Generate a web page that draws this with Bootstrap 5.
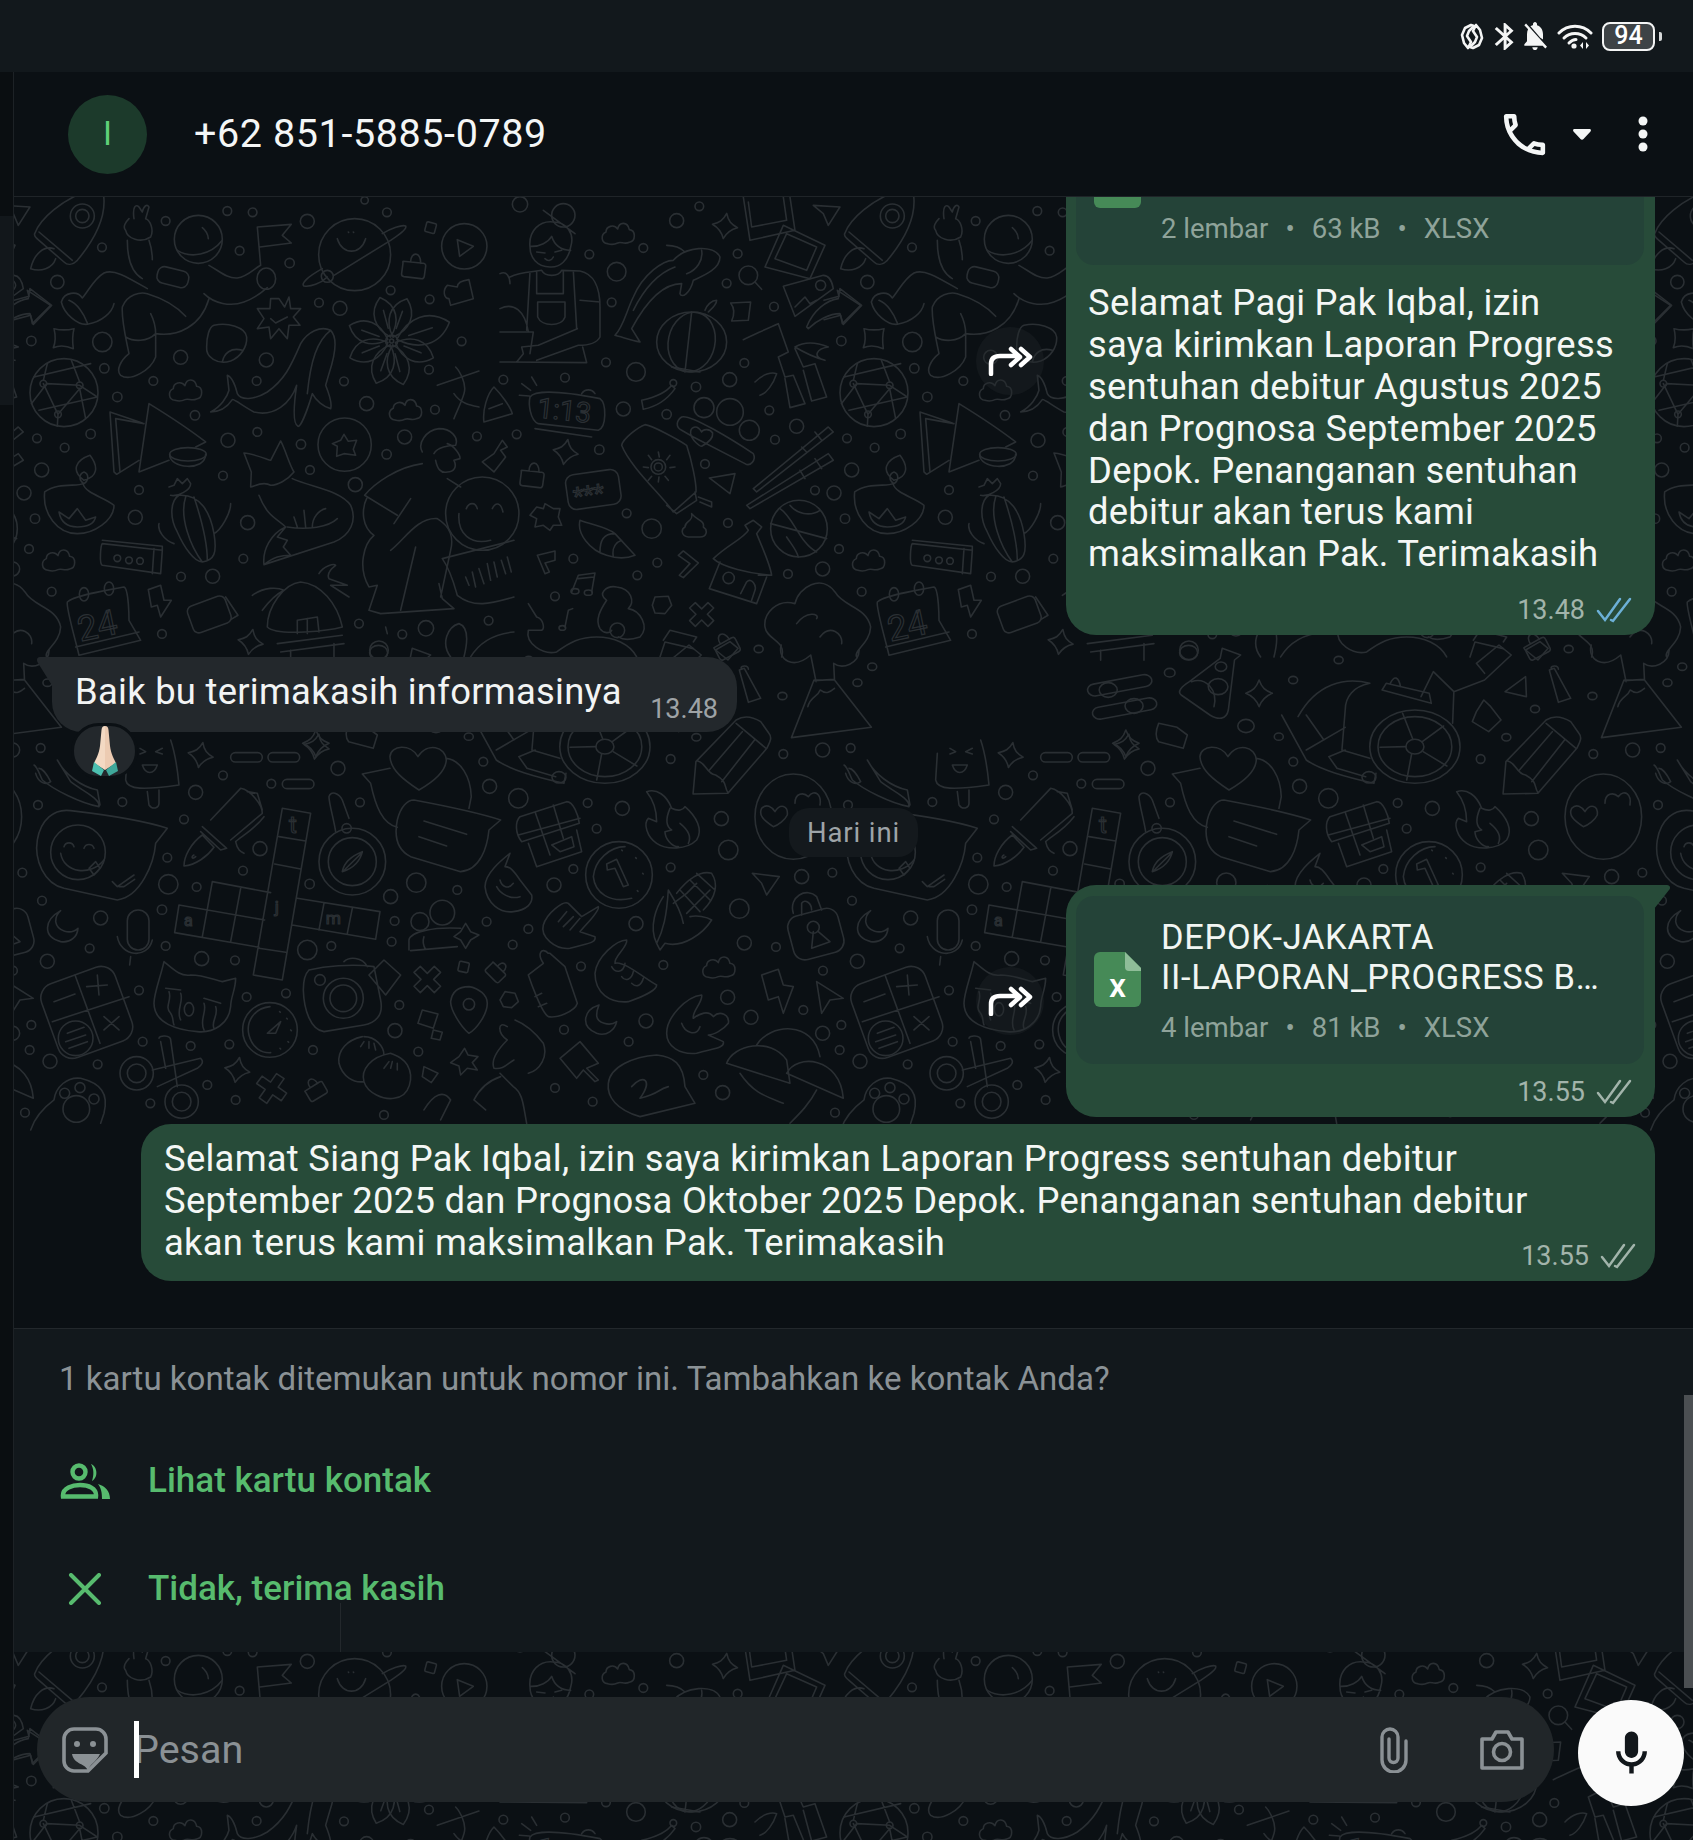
<!doctype html>
<html lang="id">
<head>
<meta charset="utf-8">
<title>Chat</title>
<link href="https://cdn.jsdelivr.net/npm/bootstrap@5.3.0/dist/css/bootstrap.min.css" rel="stylesheet">
<style>
html,body{margin:0;background:#0b1014}
body{font-family:Roboto,"Liberation Sans",sans-serif;color:#f2f4f4}
.phone{width:1693px;height:1840px;overflow:hidden}
.statusbar{height:72px;background:#12181c;padding-right:31px;gap:9.5px}
.stat-ic{display:block}
.batt{width:53px;height:29px;border:2.5px solid #f4f5f5;border-radius:8px;background:#3e4346;font-size:25px;font-weight:500;line-height:24px;text-align:center;color:#fff}
.nib{width:3px;height:9px;background:#d6d8d9;border-radius:0 2px 2px 0;margin-left:-5.5px}
.leftedge{width:14px;background:#0a0e11;border-right:1px solid #1d2226}
.leftedge i{display:block;height:189px;margin-top:144px;background:#12171b}
.topbar{height:125px;background:#0b1014;border-bottom:1px solid #1f2428;padding-left:54px;padding-right:45px;flex:none}
.ava{width:79px;height:79px;background:#1c3a2b;color:#5fd078;font-size:33px}
.phone-no{margin-left:47px;font-size:39.5px;color:#f4f6f6;letter-spacing:.6px}
.wall{position:relative;background:#0b1014;overflow:hidden;flex:1 1 auto;min-height:0}
.doodle{position:absolute;left:0;top:0;width:1679px;height:1643px}
.doodle path,.doodle circle,.doodle ellipse,.doodle rect{fill:none;stroke:#2a2f33;stroke-width:1.6;stroke-linejoin:round;stroke-linecap:round;vector-effect:non-scaling-stroke}
.doodle text{fill:none;stroke:#2a2f33;stroke-width:1.2;vector-effect:non-scaling-stroke;font-family:Roboto,sans-serif}
.convo{position:relative;height:1131px;padding:0 38px 47px 38px;overflow:hidden}
.bub-out{position:relative;background:#274b39;border-radius:30px;color:#f4f7f5}
.bub-w{width:589px;padding:11px 11px 9px 10px}
.tail{position:absolute;top:0}
.has-tail{border-top-right-radius:0}
.tail-r{left:100%;margin-left:-1px}
.tail-l{right:100%;margin-right:-1px}
.filebox{background:#244338;border-radius:18px;height:168px;padding:21px 0 0 18px}
.xls{flex:none;margin-top:35px}
.filetxt{margin-left:20px;min-width:0}
.fname{font-size:34.4px;line-height:40px;white-space:nowrap;color:#f2f6f3;letter-spacing:.7px}
.fgap{height:80px}
.fmeta{font-size:27.5px;line-height:34px;margin-top:14px;color:#8fa39a;white-space:nowrap}
.dotsep{margin:0 17px}
.msgtxt{font-size:36.4px;line-height:41.8px;letter-spacing:.27px}
.meta{font-size:27px;line-height:32px;color:#a2b4ab}
.time-in{font-size:27px;line-height:32px;color:#9ea3a6}
.fwd{width:68px;height:68px;background:rgba(34,40,44,.35);border-radius:50%;margin-right:22px;flex:none}
.bub-in{position:relative;background:#23282c;border-radius:0 30px 30px 30px;width:685px;height:75px;padding:0 19px 0 23px}
.react{position:absolute;left:19px;top:66px;width:67px;height:56px;background:#23282c;border:3px solid #0b1014}
.datepill{width:129px;height:49px;background:#14191d;color:#9ea4a8;font-size:27.5px;letter-spacing:.9px;border-radius:20px;margin:76px auto 28px}
.bub-long{width:1514px;height:157px;padding:14px 20px 0 23px;margin-top:7px}
.meta-abs{position:absolute;right:19px;bottom:9px}
.askcard{position:relative;height:324px;background:#12181c;border-top:1px solid #23282c}
.asktext{font-size:33.1px;color:#8b9296;padding:28px 0 0 45px;line-height:44px}
.askrow{height:108px;padding-left:46px;color:#57bb6e;font-size:35px;font-weight:500}
.askrow svg{flex:none}
.askic{width:50px;margin-right:38px}
.seam{position:absolute;left:324px;bottom:0;width:3px;height:49px;border-right:1px solid #23282c}
.composer{position:relative;padding:45px 9px 0 23px;gap:24px}
.inputbox{flex:1 1 auto;height:105px;background:#212629;border-radius:53px;padding:0 29px 0 25px}
.cursorbar{width:5px;height:57px;background:#fff;margin-left:26px;margin-right:-5px;position:relative;z-index:1}
.hint{font-size:39.5px;color:#8b9195}
.micbtn{width:106px;height:106px;background:#fafafa;margin-top:3px;flex:none}
.scrollthumb{position:absolute;right:0;top:1198px;width:9px;height:293px;background:#4b4f52;z-index:3}
</style>
</head>
<body>
<div class="phone d-flex flex-column">
  <div class="statusbar d-flex justify-content-end align-items-center flex-none">
    <svg class="stat-ic" width="24" height="27" viewBox="0 0 24 27" fill="none" stroke="#f4f5f5" stroke-width="2.600" stroke-linejoin="round"><path d="M11 2 5 5 2 12 4 20 8 25 11 19 7 13 9 8 14 3Z"/><path d="M13 25 19 22 22 15 20 7 16 2 13 8 17 14 15 19 10 24Z"/></svg>
    <svg class="stat-ic" width="20" height="27" viewBox="4.500 2 13.500 20" preserveAspectRatio="none" fill="#f4f5f5"><path d="M17.710 7.710L12 2h-1v7.590L6.410 5 5 6.410 10.590 12 5 17.590 6.410 19 11 14.410V22h1l5.710-5.710-4.300-4.290 4.300-4.290zM13 5.830l1.880 1.880L13 9.590V5.830zm1.880 10.460L13 18.170v-3.760l1.880 1.880z"/></svg>
    <svg class="stat-ic" width="24" height="28" viewBox="3 2.500 18 19.500" preserveAspectRatio="none" fill="#f4f5f5"><path d="M20 18.690L7.840 6.140 5.270 3.490 4 4.760l2.800 2.800v.01c-.52.99-.8 2.160-.8 3.420v5l-2 2v1h13.730l2 2L21 19.720l-1-1.030zM12 22c1.110 0 2-.89 2-2h-4c0 1.110.89 2 2 2zm6-7.320V11c0-3.080-1.640-5.640-4.500-6.320V4c0-.83-.67-1.500-1.500-1.500s-1.500.67-1.500 1.500v.68c-.15.03-.29.08-.42.12-.1.03-.2.07-.3.11h-.01c-.2.08-.4.17-.59.27-.2.1-.4.2-.59.33l7.410 7.970z"/></svg>
    <svg class="stat-ic" width="36" height="27" viewBox="0 0 36 27" fill="none" stroke="#f4f5f5" stroke-width="3" stroke-linecap="round"><path d="M2 10C11 1 25 1 34 10"/><path d="M7 15C13 9 23 9 29 15"/><path d="M12 20C15 17 17 16.500 19 16.500"/><circle cx="17" cy="23" r="2.600" fill="#f4f5f5" stroke="none"/><path d="M26 19 23 22.500 26 26ZM29 19 32 22.500 29 26Z" fill="#f4f5f5" stroke="none"/></svg>
    <div class="batt">94</div><div class="nib"></div>
  </div>
  <div class="d-flex flex-grow-1" style="min-height:0">
    <div class="leftedge flex-shrink-0"><i></i></div>
    <div class="d-flex flex-column flex-grow-1" style="min-width:0">
      <div class="topbar d-flex align-items-center">
        <div class="ava rounded-circle d-flex align-items-center justify-content-center">I</div>
        <div class="phone-no">+62 851-5885-0789</div>
        <div class="ms-auto d-flex align-items-center">
          <svg width="55" height="55" viewBox="0 0 24 24" fill="#f4f6f6"><path d="M6.540 5c.06.89.21 1.760.45 2.590l-1.200 1.200c-.41-1.200-.67-2.470-.76-3.790h1.510m9.860 12.020c.85.24 1.720.39 2.600.45v1.490c-1.320-.09-2.590-.35-3.800-.75l1.200-1.190M7.500 3H4c-.55 0-1 .45-1 1 0 9.390 7.610 17 17 17 .55 0 1-.45 1-1v-3.490c0-.55-.45-1-1-1-1.240 0-2.450-.2-3.570-.57-.1-.04-.21-.05-.31-.05-.26 0-.51.1-.71.29l-2.200 2.200c-2.830-1.450-5.150-3.760-6.590-6.590l2.200-2.200c.28-.28.36-.67.25-1.020C8.700 6.450 8.500 5.250 8.500 4c0-.55-.45-1-1-1z"/></svg>
          <svg style="margin-left:21px" width="18" height="11" viewBox="0 0 18 11" fill="#f4f6f6"><path d="M1.500 0H16.500C18 0 18.300 1.500 17.500 2.500L10.500 10C9.700 11 8.300 11 7.500 10L.5 2.500C-.3 1.500 0 0 1.500 0Z"/></svg>
          <svg style="margin-left:47px" width="10" height="36" viewBox="0 0 10 36" fill="#f4f6f6"><circle cx="5" cy="5" r="4.500"/><circle cx="5" cy="18" r="4.500"/><circle cx="5" cy="31" r="4.500"/></svg>
        </div>
      </div>
      <div class="wall d-flex flex-column">
        <svg class="doodle" viewBox="0 0 1679 1643" aria-hidden="true">
          <defs>
            <path id="cl" d="M-30 32C-50 30-52 5-35-3-35-20-12-28 0-12 5-35 30-35 35-10 55-8 55 25 35 28 20 35 10 25 0 30-10 35-20 35-30 32Z"/>
            <path id="sp" d="M0-38C8-15 18-8 38 0 18 8 8 18 0 38-8 18-18 8-38 0-18-8-8-15 0-38Z"/>
            <path id="pt" d="M0-12C-40-50-45-100 0-135 45-100 40-50 0-12ZM0-40 0-95"/>
            <path id="xc" d="M-20-37 0-17 20-37 38-20 18 0 38 20 20 38 0 18-20 38-38 20-18 0-38-20Z"/>
            <path id="lk" d="M-32-20 28-14C34-13 36-10 35-4L31 25C30 31 27 33 21 32L-30 26C-36 25-38 22-37 16L-33-14C-33-18-34-20-32-20ZM-10-18C-10-50 22-50 20-14"/>
            <g id="tile">
              <g transform="scale(.3333)">
                <path d="M62 110C80 60 150 10 200-10L268-10C280 60 240 130 190 190 175 205 160 205 150 195L75 130C65 122 60 115 62 110ZM75 105 175 190M120 155C90 145 60 170 50 215 80 225 115 215 125 185"/>
                <circle cx="205" cy="57" r="36"/><circle cx="205" cy="57" r="20"/>
                <path d="M345 65C335 75 325 90 335 100 340 125 380 140 410 120 420 100 410 70 395 65L405 30C400 20 390 25 385 45L375 30C365 20 355 30 360 65M340 130C340 180 350 225 385 245M405 130C412 150 415 170 415 188M490 160C530 185 590 175 625 130M565 92C575 100 582 112 583 125"/>
                <circle cx="553" cy="127" r="72"/><rect x="430" y="215" width="95" height="50" rx="20" transform="rotate(14 475 237)"/>
                <path d="M400 275C340 240 300 215 270 228 240 245 225 280 205 303 190 280 150 285 142 315 150 350 190 385 220 382 265 375 295 345 300 320M165 310C190 320 210 350 220 378M325 330C340 290 380 285 400 290 450 305 490 330 515 358M325 330C322 370 335 420 345 470 320 490 305 520 320 535 350 555 410 520 425 480L425 410M335 420C360 435 400 435 425 410M425 410C490 420 560 390 585 305M410 350C420 370 425 390 425 410M585 205C620 225 640 245 670 243 700 240 720 215 740 205M570 290C600 320 650 330 690 315 720 305 745 285 760 272M740 205 730 90 832 82 805 115 832 138 738 150"/>
                <ellipse cx="757" cy="245" rx="28" ry="32"/>
                <circle cx="1022" cy="173" r="108"/><circle cx="940" cy="238" r="18"/>
                <path d="M925 215C880 240 860 260 870 267 890 270 920 260 940 240M960 235 1130 130C1160 110 1180 95 1175 87 1165 82 1130 95 1105 110M970 125C985 175 1040 175 1055 125M1003 105 1004 106M1018 105 1019 106"/>
                <circle cx="1351" cy="148" r="68"/><path d="M1330 128 1378 148 1337 178Z"/>
                <use href="#lk" transform="translate(1200 213)"/><rect x="1235" y="77" width="30" height="30" rx="4" transform="rotate(15 1250 92)"/>
                <path d="M1300 265 1330 270C1330 255 1350 250 1365 248L1378 305 1310 325 1305 305C1290 305 1285 280 1300 265Z"/>
                <path d="M795 305 812 330 825 300 830 335 860 335 838 360 858 385 825 385 820 425 795 395 770 425 765 390 730 395 750 365 730 335 768 335 770 305ZM770 365 785 378 820 360"/>
                <path d="M600 385C640 375 695 390 698 420 700 450 680 480 650 492 610 505 575 480 578 450 578 420 585 390 600 385ZM625 495C630 470 650 450 685 460"/>
                <path d="M120 395C140 400 160 400 180 395 175 415 175 435 178 455 155 445 135 445 118 452 125 435 125 415 120 395Z"/>
                <path d="M0 310 45 298 40 280 110 325 55 380 50 355 0 368"/>
                <circle cx="150" cy="587" r="102"/><circle cx="88" cy="560" r="10"/><circle cx="197" cy="565" r="10"/><circle cx="132" cy="652" r="10"/>
                <path d="M60 540 230 500M52 620 98 560 197 565 250 600M75 640 250 600M88 560 132 652 130 688M88 550 100 500M197 555 172 490M197 575 215 665M132 652 197 575"/>
                <g transform="translate(1133 432)"><use href="#pt" transform="rotate(-15)"/><use href="#pt" transform="rotate(20)"/><use href="#pt" transform="rotate(72) scale(1.3 1.35)"/><use href="#pt" transform="rotate(112)"/><use href="#pt" transform="rotate(165)"/><use href="#pt" transform="rotate(200)"/><use href="#pt" transform="rotate(248)"/><use href="#pt" transform="rotate(290)"/><circle r="18"/><circle r="6"/></g>
                <path d="M590 645C620 630 640 600 645 580L640 535C655 540 665 570 670 590 680 610 720 610 760 585 810 550 830 510 860 440 880 405 920 385 950 400 970 420 965 470 945 530L935 565C945 590 955 620 950 635 930 630 905 610 895 590 880 640 860 690 852 688 835 680 840 620 848 565 830 620 780 660 720 645 690 630 660 605 655 608 640 630 620 645 590 645ZM950 400C910 430 890 490 880 590"/>
                <use href="#cl" transform="translate(513 578)"/><use href="#cl" transform="translate(1173 637)"/><use href="#cl" transform="translate(132 1088)"/>
                <path d="M288 645 385 678M305 665 390 680M288 645 300 825 308 832 375 790M305 665 318 825M405 620 375 825 465 790M405 620C470 660 530 700 575 735L545 750"/>
                <ellipse cx="522" cy="772" rx="55" ry="20"/><path d="M467 772C465 815 575 825 575 772"/>
                <circle cx="992" cy="743" r="80"/><path d="M990 712 1003 733 1028 730 1018 757 1025 775 990 770 968 778 970 748 955 740 980 730Z"/>
                <path d="M690 768C720 770 765 790 770 790L800 732C815 760 825 800 840 825 820 850 790 865 770 865 745 850 720 870 710 870L712 825ZM835 845C890 870 980 880 1010 925 1030 970 1010 1015 960 1035L750 1103C745 1060 770 1010 815 990 790 965 760 960 735 895M750 1103C780 1080 800 1075 830 1075L808 1050 820 1030 790 1020 815 990M820 990C880 1000 945 990 970 965M870 940 875 990M895 990C895 960 915 940 935 935M840 960 850 990"/>
                <path d="M1225 765C1210 740 1235 700 1275 695 1310 695 1335 720 1325 745 1305 745 1270 750 1260 770M1300 740C1320 745 1340 775 1338 785L1320 790C1330 810 1320 825 1300 825 1280 830 1270 815 1265 790M1225 800C1150 810 1080 860 1052 895L1150 955M1060 900C1040 940 1045 990 1080 1015 1050 1040 1030 1110 1065 1170L1090 1165 1065 1240 1100 1250 1320 1235 1285 1205 1275 1160M1130 1060C1170 1030 1210 960 1270 965 1310 990 1320 1020 1310 1060L1280 1200M1205 1050 1160 1240M1190 905 1140 980M1300 845 1340 870"/>
                <circle cx="1405" cy="950" r="110"/>
                <path d="M1335 950C1330 1010 1370 1045 1430 1030M1357 935C1365 915 1385 915 1390 935M1435 935C1445 915 1460 915 1467 945M1285 1085 1500 1030M1285 1085C1310 1120 1320 1160 1330 1195 1380 1235 1430 1220 1500 1200M1355 1140 1365 1165M1375 1125 1385 1170M1395 1115 1410 1160M1420 1100 1430 1150M1440 1095 1450 1140M1462 1090 1475 1130M1480 1080 1492 1125"/>
                <path d="M210 850C170 820 185 790 228 775 255 810 250 840 210 850M210 825C195 830 193 850 210 860 225 850 225 830 210 825M92 885C130 855 190 870 207 860 215 890 270 900 300 925 300 970 240 1010 190 1010 130 1010 85 950 92 885ZM135 945C140 975 160 990 190 990 210 990 240 985 245 960L215 970 190 935 165 965Z"/>
                <path d="M495 895C470 910 465 960 490 1005 510 1050 540 1095 565 1095 600 1090 610 1070 600 1010 590 950 560 890 495 895M465 870 480 865 490 845 505 860 520 845 530 860C530 880 490 900 470 895M480 1040C450 1030 430 1000 435 980M600 1010C620 1000 650 950 650 920M515 900C495 960 530 1050 565 1095M540 900C560 960 580 1030 580 1090"/>
                <path d="M265 1040 445 1060 440 1130 265 1105C255 1100 260 1045 265 1040ZM265 1030 445 1048 445 1060M420 1055 415 1130"/>
                <circle cx="310" cy="1084" r="10"/><circle cx="345" cy="1090" r="10"/><circle cx="378" cy="1092" r="10"/>
                <path d="M160 1215C180 1195 280 1180 330 1170 345 1175 345 1270 345 1270L380 1330 195 1375C190 1350 155 1230 160 1215ZM185 1350 375 1305"/>
                <ellipse cx="210" cy="1192" rx="14" ry="20"/><ellipse cx="285" cy="1175" rx="14" ry="20"/>
                <text x="192" y="1322" font-size="105" transform="rotate(-12 250 1290)">24</text>
                <path d="M403 1178 440 1165 450 1210 472 1210 440 1260 430 1225 412 1230Z"/>
                <rect x="525" y="1210" width="120" height="85" rx="18" transform="rotate(-20 585 1250)"/><path d="M635 1200 672 1255 650 1268"/>
                <path d="M760 1290C760 1230 810 1160 860 1155 920 1160 970 1220 985 1290 950 1300 790 1320 760 1290ZM715 1195C750 1170 790 1170 810 1180 780 1195 760 1220 745 1240M915 1130C930 1105 960 1100 965 1105 945 1120 940 1135 945 1145L1000 1165 950 1165 1005 1200M790 1340 985 1315M800 1365 990 1340M830 1360 830 1390M960 1340 960 1390M850 1310 850 1270 910 1260 915 1305M880 1265 880 1310"/>
                <use href="#sp" transform="translate(710 1335) rotate(10)"/>
                <path d="M1270 565 1395 522M1325 510C1335 520 1360 560 1350 590 1345 610 1330 640 1320 665M1320 590C1340 620 1370 625 1395 630M1410 675C1405 640 1420 590 1440 570 1460 590 1490 630 1495 650L1410 675ZM1425 635 1465 620M1465 730 1480 750 1460 760 1475 780 1440 825 1405 795 1440 770Z"/>
                <path d="M1115 1290 1120 1310M1310 1380C1280 1340 1300 1290 1335 1280 1365 1290 1360 1340 1350 1380M1370 1380C1400 1330 1450 1310 1500 1305"/>
                <circle cx="640" cy="42" r="13"/><circle cx="716" cy="46" r="13"/><circle cx="880" cy="73" r="21"/><circle cx="677" cy="161" r="13"/><circle cx="827" cy="198" r="14"/><circle cx="264" cy="151" r="13"/><circle cx="455" cy="72" r="13"/><circle cx="130" cy="255" r="20"/><circle cx="1052" cy="10" r="11"/><circle cx="1119" cy="46" r="13"/><circle cx="1130" cy="280" r="13"/><circle cx="915" cy="317" r="13"/><circle cx="978" cy="334" r="21"/><circle cx="1247" cy="307" r="13"/><circle cx="52" cy="432" r="14"/><circle cx="265" cy="435" r="29"/><circle cx="500" cy="481" r="21"/><circle cx="757" cy="489" r="21"/><circle cx="271" cy="514" r="14"/><circle cx="418" cy="552" r="13"/><circle cx="728" cy="552" r="13"/><circle cx="990" cy="553" r="13"/><circle cx="310" cy="600" r="14"/><circle cx="1058" cy="620" r="21"/><circle cx="1263" cy="638" r="13"/><circle cx="543" cy="655" r="14"/><circle cx="1245" cy="518" r="13"/><circle cx="1343" cy="433" r="13"/><circle cx="69" cy="724" r="13"/><circle cx="230" cy="711" r="14"/><circle cx="152" cy="752" r="13"/><circle cx="642" cy="730" r="21"/><circle cx="730" cy="705" r="13"/><circle cx="861" cy="742" r="14"/><circle cx="1172" cy="720" r="21"/><circle cx="1118" cy="772" r="14"/><circle cx="1389" cy="718" r="13"/><circle cx="83" cy="819" r="21"/><circle cx="627" cy="836" r="13"/><circle cx="888" cy="819" r="13"/><circle cx="1024" cy="863" r="21"/><circle cx="30" cy="888" r="21"/><circle cx="375" cy="879" r="13"/><circle cx="63" cy="965" r="14"/><circle cx="364" cy="961" r="21"/><circle cx="701" cy="977" r="21"/><circle cx="45" cy="1056" r="13"/><circle cx="688" cy="1085" r="13"/><circle cx="501" cy="1139" r="13"/><circle cx="596" cy="1138" r="21"/><circle cx="113" cy="1184" r="13"/><circle cx="444" cy="1311" r="13"/><circle cx="1035" cy="1280" r="13"/><circle cx="1165" cy="1312" r="13"/><circle cx="1236" cy="1294" r="23"/><circle cx="1424" cy="1271" r="13"/><circle cx="1095" cy="1360" r="28"/>
              </g>
              <g transform="translate(486 0) scale(.3333)">
                <circle cx="190" cy="55" r="35"/>
                <path d="M90 150C85 100 120 70 160 75 200 75 225 110 212 150 205 190 180 212 150 210 110 210 90 180 90 150ZM90 148C120 150 145 135 155 118 165 150 190 160 212 160M110 165 135 168M165 165 185 160M135 185C145 195 155 190 160 180M130 40 225 110M90 225 80 400M110 225 110 290 190 290 190 225M220 222 230 395M113 315 195 315 195 360C185 390 125 390 113 360ZM30 240C60 225 100 225 125 220 135 240 175 240 185 220L240 222C280 230 300 270 300 330L300 420C290 440 260 445 235 445L110 490M232 395 115 445 65 450 70 470 50 495M0 495 260 497 248 450M0 405 100 405 90 470M0 335C40 315 75 340 85 405M240 310 300 315M0 230C20 220 30 240 30 260"/>
                <use href="#cl" transform="translate(353 108)"/><use href="#sp" transform="translate(675 87) rotate(8)"/>
                <path d="M730 0 750 130 885 100 870 0M745 15 755 90 860 70 850 0M850 85 975 145 930 245 795 210ZM860 110 950 150 920 220 825 185ZM940 25 1020 30 985 85 970 50Z"/>
                <path d="M850 268 970 235C985 235 995 245 1000 275L885 358ZM885 330 915 300 930 320 950 310M920 390C940 340 980 310 1015 305L1020 275 1085 325 1030 382 1020 350C990 350 950 370 925 395Z"/><circle cx="962" cy="265" r="15"/>
                <circle cx="745" cy="235" r="28"/><path d="M765 255 785 277"/>
                <path d="M345 415C370 390 380 340 400 300 430 230 490 190 520 190 555 150 640 140 660 180 660 220 600 240 580 250 570 290 545 305 540 290L545 260C480 260 430 330 395 395L420 435C395 430 365 420 345 415ZM500 145C525 145 545 155 555 165M560 230C590 220 610 190 605 160M400 340C430 280 470 230 525 210"/>
                <ellipse cx="575" cy="435" rx="105" ry="90"/><ellipse cx="575" cy="435" rx="70" ry="90" transform="rotate(12 575 435)"/><path d="M575 345 555 525M615 340C620 325 635 310 650 310 650 325 630 340 625 345M515 510 600 525M425 610C470 600 500 585 515 565L525 575C500 610 465 630 430 637Z"/><circle cx="520" cy="558" r="10"/>
                <path d="M692 318 752 315 745 370 695 372C705 350 705 335 692 318Z"/>
                <path d="M730 428C770 410 810 390 835 380L865 465 835 480 855 540 880 535 915 620 870 632 855 545M885 455 910 510 945 500 980 600 935 612 910 520M885 450C920 430 960 440 985 450 950 455 935 480 975 490 940 480 910 465 885 450ZM765 555C790 530 815 525 830 530 820 560 800 590 780 595"/>
                <path d="M90 600C100 585 150 575 300 605 320 620 320 690 295 700L115 680C90 670 85 620 90 600ZM105 695 275 720M95 540 110 565M65 560 92 580M58 595 88 597M245 590C255 575 275 575 285 590"/>
                <text x="112" y="670" font-size="84" transform="rotate(6 200 640)">1:13</text>
                <circle cx="612" cy="632" r="30"/><circle cx="690" cy="645" r="40"/><circle cx="748" cy="700" r="30"/>
                <path d="M545 660C570 650 700 730 760 770 770 790 750 810 735 800L580 720 545 700C525 690 530 670 545 660ZM605 705C590 680 570 690 572 710 575 730 600 748 605 748 620 740 640 725 638 708 630 695 610 695 605 705Z"/>
                <path d="M435 683C455 685 530 725 560 745 575 790 590 860 588 885L520 945C490 900 390 810 365 745 368 725 415 690 435 683ZM585 885 590 910 530 950 500 925M595 900 635 915 635 930 600 915M475 765 478 780M510 775 500 788M525 810 510 812M505 850 495 838M475 855 477 840M445 850 455 838M430 810 445 812M445 775 455 788"/>
                <circle cx="475" cy="810" r="22"/><circle cx="475" cy="810" r="12"/>
                <path d="M760 875 985 690 1000 705 770 885ZM740 925 985 770 1000 790 750 935ZM905 750 920 765M945 705 965 730M900 820 915 845M945 785 965 815M628 843 705 830 690 890Z"/>
                <use href="#sp" transform="translate(197 765) rotate(10)"/><use href="#lk" transform="translate(97 840)"/>
                <rect x="200" y="825" width="160" height="105" rx="25" transform="rotate(-8 280 877)"/><text x="218" y="915" font-size="72" transform="rotate(-8 280 877)">***</text>
                <path d="M110 930 130 935 135 920 160 935 180 935 175 960 185 985 160 985 150 1000 130 985 105 990 110 965 90 955ZM240 970C280 985 320 990 345 1010L405 1075C380 1085 350 1085 320 1075 270 1060 230 1010 240 970ZM300 1065C300 1030 310 1010 345 1010M340 1080C335 1050 350 1035 365 1030M575 950C590 970 615 970 610 990 625 1000 620 1020 600 1020L565 1020C540 1015 545 995 555 990 555 970 580 975 575 950ZM112 1075 165 1062 165 1090 135 1098 148 1125 135 1130ZM535 1075 550 1062 595 1098 550 1142 538 1135 570 1100Z"/>
                <path d="M640 1085C680 1045 730 1025 745 1000L735 985 760 970 785 990 770 1010C790 1060 810 1100 815 1135L775 1135M660 1095 628 1175 770 1220 800 1140M722 1190 740 1155C755 1140 770 1165 765 1180L755 1210M640 1085C665 1110 750 1130 815 1135"/><circle cx="686" cy="1143" r="17"/>
                <circle cx="897" cy="995" r="85"/><path d="M840 935C880 960 900 1040 950 1065M860 1020C880 1050 890 1060 895 1080M812 980 980 1025M870 925C890 950 930 960 960 940"/>
                <path d="M215 1185 235 1135 285 1128 275 1185M235 1145 282 1140M195 1290 205 1240 218 1235"/><ellipse cx="225" cy="1183" rx="12" ry="8"/><ellipse cx="265" cy="1187" rx="12" ry="8"/><ellipse cx="187" cy="1293" rx="10" ry="7"/>
                <path d="M320 1210C290 1190 320 1165 350 1170 395 1175 405 1215 385 1235 420 1240 450 1290 420 1320 390 1330 370 1330 355 1320M320 1210C300 1240 285 1270 300 1295 310 1310 330 1310 335 1300M85 1220 110 1260C130 1265 135 1295 125 1300L85 1300C75 1340 130 1375 170 1365 210 1335 240 1320 290 1320 340 1320 390 1340 410 1380"/><circle cx="352" cy="1300" r="22"/>
                <path d="M465 1200 505 1198 515 1225 495 1250 465 1248 457 1225Z"/><use href="#xc" transform="translate(605 1252) scale(.95)"/>
                <path d="M885 1220C895 1170 965 1130 1005 1185 1030 1230 1100 1230 1112 1290 1110 1340 1060 1360 1070 1380M885 1220C830 1205 790 1250 795 1290 800 1330 860 1330 845 1380M890 1280C920 1240 960 1250 950 1265M960 1320C990 1280 1030 1310 1025 1340M490 1330 510 1300 590 1320 580 1335M480 1380 495 1335 580 1355"/>
                <use href="#lk" transform="translate(680 1350) rotate(-35)"/>
                <circle cx="60" cy="22" r="23"/><circle cx="598" cy="28" r="13"/><circle cx="530" cy="71" r="21"/><circle cx="430" cy="153" r="13"/><circle cx="268" cy="172" r="13"/><circle cx="350" cy="224" r="28"/><circle cx="713" cy="170" r="13"/><circle cx="680" cy="259" r="13"/><circle cx="335" cy="316" r="13"/><circle cx="822" cy="329" r="13"/><circle cx="318" cy="496" r="13"/><circle cx="408" cy="525" r="28"/><circle cx="733" cy="498" r="13"/><circle cx="689" cy="548" r="21"/><circle cx="10" cy="548" r="13"/><circle cx="195" cy="542" r="13"/><circle cx="588" cy="570" r="14"/><circle cx="370" cy="636" r="21"/><circle cx="500" cy="652" r="14"/><circle cx="808" cy="640" r="13"/><circle cx="50" cy="712" r="13"/><circle cx="890" cy="688" r="21"/><circle cx="825" cy="728" r="13"/><circle cx="298" cy="758" r="14"/><circle cx="615" cy="801" r="13"/><circle cx="945" cy="880" r="13"/><circle cx="380" cy="949" r="13"/><circle cx="684" cy="978" r="13"/><circle cx="455" cy="995" r="29"/><circle cx="220" cy="1085" r="13"/><circle cx="472" cy="1097" r="13"/><circle cx="412" cy="1135" r="13"/><circle cx="864" cy="1131" r="13"/><circle cx="968" cy="1116" r="21"/><circle cx="165" cy="1198" r="13"/>
              </g>
              <g transform="translate(226 443) scale(.41 .3333)">
                <rect x="90" y="118" width="160" height="36" rx="18" transform="rotate(-13 170 136)"/><circle cx="142" cy="150" r="22"/><rect x="102" y="188" width="160" height="36" rx="18" transform="rotate(-13 180 206)"/><circle cx="205" cy="198" r="22"/>
                <path d="M420 25 465 45 450 60 435 210C430 240 410 240 390 225L320 165C310 155 320 140 340 125L415 55ZM345 125C380 110 410 150 400 200"/><circle cx="417" cy="80" r="14"/><circle cx="410" cy="140" r="24"/>
                <use href="#sp" transform="translate(510 160) scale(.85 1.05)"/><use href="#sp" transform="translate(185 310) scale(.85 1.05)"/>
                <path d="M265 250 310 262 335 285 325 325 265 305C255 290 260 265 265 250Z"/>
                <circle cx="338" cy="38" r="22"/><circle cx="292" cy="98" r="13"/><circle cx="478" cy="258" r="20"/><circle cx="558" cy="290" r="11"/><circle cx="593" cy="120" r="11"/><circle cx="704" cy="60" r="11"/><circle cx="1183" cy="207" r="11"/><circle cx="1113" cy="292" r="11"/><circle cx="1323" cy="168" r="11"/><circle cx="1506" cy="128" r="11"/><circle cx="1265" cy="27" r="11"/><circle cx="1542" cy="80" r="11"/>
                <path d="M565 225 625 360C660 390 720 410 790 430L795 400M625 225 668 300M625 330 720 262M605 230C650 130 720 110 780 130 740 140 720 170 720 210L712 330 780 355M700 385 680 350 720 330M810 150 930 190 925 160 820 130ZM830 130C840 105 850 110 855 140M700 385 770 410"/>
                <circle cx="890" cy="320" r="110"/><circle cx="890" cy="320" r="90"/><circle cx="890" cy="320" r="22"/><circle cx="778" cy="412" r="17"/>
                <path d="M885 298 860 220M908 305 960 258M910 335 968 378M882 342 870 420M868 320 805 322M905 170 935 95 985 155 1060 120 1125 45 1095 15 1040 70 1060 100M985 155 982 250"/>
                <path d="M1112 365 1210 240C1230 225 1250 230 1270 245L1290 280C1300 295 1290 310 1285 325L1190 460 1105 462ZM1115 362C1140 370 1135 400 1160 405 1190 425 1180 440 1190 458M1210 250 1283 325M1145 390 1225 275M1175 425 1255 300"/>
                <path d="M1345 293 1540 262 1450 120 1400 120ZM1405 125 1392 45C1350 90 1310 60 1320 15M1450 120 1448 70C1470 90 1510 70 1510 30M1400 122 1450 118M1385 200C1390 170 1410 170 1415 150 1430 165 1440 155 1450 145"/>
                <path d="M1218 90 1230 85 1270 175 1240 187 1220 100ZM1222 85C1222 75 1240 75 1240 88M1110 155 1160 110 1162 170ZM1160 30 1195 5 1215 25 1190 60ZM1058 180 1075 200 1100 240 1070 275 1030 245 1040 215Z"/>
              </g>
              <g transform="translate(0 543) scale(.3333)">
                <path d="M335 120C340 150 390 150 495 135 490 80 480 30 470 0M335 120 340 40M400 155 405 195C415 210 435 205 435 190L435 150M385 75C395 105 420 105 430 75ZM378 25 395 35 378 42M445 25 425 35 445 42"/>
                <use href="#sp" transform="translate(560 45) rotate(10)"/><use href="#sp" transform="translate(908 20) rotate(10)"/>
                <rect x="650" y="38" width="95" height="28" rx="14"/><rect x="762" y="38" width="95" height="28" rx="14"/><rect x="805" y="118" width="95" height="28" rx="14"/>
                <path d="M60 75C70 80 75 100 85 120 120 150 200 190 255 200 260 175 200 150 170 125L130 60C150 100 200 140 250 150L258 195M65 100C70 120 90 140 110 125 100 105 85 85 75 85"/>
                <path d="M170 212C280 225 400 245 460 265L425 310C420 370 380 470 310 480L150 445C90 430 60 360 70 300 80 240 120 205 170 212Z"/><circle cx="192" cy="337" r="82"/>
                <path d="M140 340C150 400 230 410 270 360M150 320C155 305 175 305 180 320M210 325C215 310 235 310 240 325M225 385 245 365 258 385 240 405ZM295 425 310 440 360 405M315 440 330 440 362 418"/>
                <path d="M510 378C510 350 530 310 565 285L600 322C580 350 545 375 510 378ZM565 260 638 325 620 330 560 275M590 240 680 145C710 150 745 195 745 220L650 300M700 155 730 160 745 210M750 230C720 270 680 290 665 305 670 330 680 335 690 340M540 345C530 350 535 360 545 350"/>
                <path d="M805 205 718 705 805 720 890 220ZM795 290 875 303M782 372 860 387M735 625 815 637M495 495 482 578 735 622M495 495 752 540M835 555 1085 598 1098 515 850 475M770 458 595 425 565 590M680 445 650 605M930 490 915 570M1015 505 1000 580"/>
                <text x="825" y="278" font-size="72">t</text><text x="510" y="558" font-size="48">a</text><text x="782" y="520" font-size="52">j</text><text x="935" y="552" font-size="52">m</text>
                <circle cx="1015" cy="365" r="100"/><circle cx="1015" cy="365" r="72"/><circle cx="998" cy="265" r="14"/>
                <path d="M985 395C990 365 1020 345 1045 335 1040 360 1020 385 985 395ZM988 393 1045 337M965 275C960 240 945 190 945 170 950 150 975 160 985 180L1005 235"/>
                <path d="M1215 150C1170 120 1130 90 1128 50 1130 15 1190 10 1212 50 1240 5 1295 20 1297 60 1295 100 1250 130 1215 150ZM1128 85 1045 102 1070 130C1085 200 1105 250 1150 262M1297 55C1340 60 1370 110 1372 170L1365 205M1200 180C1280 195 1400 220 1460 240L1425 270C1420 320 1400 390 1340 395L1190 350C1150 330 1140 290 1150 240 1160 200 1180 180 1200 180ZM1230 243 1358 283M1215 290 1298 318"/>
                <path d="M140 512C90 540 85 590 140 605 170 610 190 590 192 565 170 585 130 575 125 545 125 530 130 520 140 512Z"/>
                <rect x="340" y="510" width="65" height="120" rx="32"/><path d="M310 590C320 650 400 660 415 600M350 650 347 675"/>
                <rect x="100" y="700" width="235" height="235" rx="45" transform="rotate(-20 217 815)"/><circle cx="185" cy="895" r="52"/>
                <path d="M183 705 258 910M115 845 345 770M160 880 210 862M155 905 215 885M165 925 220 905M120 785 183 762M218 740 280 735M250 705 255 765M270 870 315 830M270 830 315 870"/>
                <path d="M450 665C480 690 500 710 530 705 570 705 600 720 625 725L665 715C665 750 650 770 650 800 645 850 600 880 550 875 490 870 420 850 420 790 420 760 440 710 450 665ZM455 745 500 750M570 775 620 790M465 755C475 780 450 800 470 820 480 835 475 845 480 855M500 760C510 785 485 810 500 840M570 790C580 815 555 840 570 870M605 800C615 825 590 845 600 865"/><ellipse cx="525" cy="808" rx="14" ry="20"/>
                <path d="M885 690C930 680 1010 670 1080 680L1100 780C1110 830 1080 850 1050 855L930 875C890 870 870 810 868 750 868 720 875 700 885 690ZM990 665C1005 650 1045 650 1060 680M1110 660 1160 705 1115 765 1065 705Z"/>
                <circle cx="988" cy="775" r="60"/><circle cx="988" cy="775" r="40"/><circle cx="918" cy="720" r="16"/>
                <circle cx="768" cy="870" r="82"/><path d="M768 800C720 805 695 845 705 885 715 925 745 940 770 938M760 880 800 845 785 880ZM797 815 799 817M818 835 820 837M830 870 832 872M822 905 824 907M798 925 800 927"/>
                <circle cx="368" cy="1000" r="50"/><circle cx="368" cy="1000" r="28"/><circle cx="503" cy="1085" r="50"/><circle cx="503" cy="1085" r="28"/>
                <path d="M435 895C435 885 470 885 470 900L490 1040M415 990 560 955C570 965 565 975 550 985L430 1040M440 905 455 985"/>
                <path d="M120 1080C125 1040 160 1010 200 1015 260 1030 285 1060 270 1120L260 1150M120 1080C80 1110 60 1140 50 1170"/>
                <circle cx="152" cy="1060" r="15"/><circle cx="198" cy="1043" r="15"/><circle cx="240" cy="1077" r="15"/><circle cx="187" cy="1107" r="40"/>
                <use href="#sp" transform="translate(670 990) rotate(10)"/><use href="#xc" transform="translate(773 1045) rotate(-10) scale(1.1)"/><use href="#lk" transform="translate(905 1050) rotate(-38) scale(.85)"/>
                <path d="M1045 890C1000 900 970 930 975 970 985 1010 1020 1030 1050 1025M1130 940C1070 950 1040 990 1050 1025 1060 1060 1110 1080 1140 1075 1190 1070 1200 1010 1180 975 1165 950 1140 945 1130 940M1050 890C1085 890 1110 920 1110 945M1040 920 1050 905M1065 925 1065 905M1085 930 1080 910M1110 985 1125 965M1130 985 1135 965M1150 990 1150 970"/>
                <path d="M1365 880C1340 860 1310 810 1310 785 1315 750 1340 740 1365 740 1395 745 1420 765 1420 790 1420 825 1385 870 1365 880Z"/><circle cx="1365" cy="793" r="17"/>
                <use href="#xc" transform="translate(1240 718) scale(1.05)"/><use href="#lk" transform="translate(1448 695) rotate(38) scale(.8)"/>
                <rect x="1334" y="666" width="30" height="30" rx="4" transform="rotate(12 1349 681)"/>
                <path d="M1225 810 1272 822 1258 865 1212 850ZM1258 870 1285 877 1278 900 1252 895ZM1352 925 1362 945 1392 950 1375 968 1390 990 1360 985 1340 1005 1335 978 1310 968 1335 950ZM1230 980 1272 1000 1252 1028 1225 1010Z"/>
                <circle cx="1285" cy="518" r="37"/><circle cx="1218" cy="545" r="27"/>
                <path d="M1185 630 1185 600C1190 575 1260 560 1340 565M1190 632 1330 620M1230 590C1225 605 1230 620 1235 628M1355 550 1370 575 1395 585 1370 600 1355 625 1340 600 1320 590 1340 575Z"/>
                <path d="M1480 860C1450 840 1450 880 1480 900 1450 930 1430 960 1440 985 1470 990 1480 970 1500 960M1380 1080C1400 1040 1430 1020 1460 1010M1380 1080 1415 1110M1230 1110C1260 1060 1290 1050 1310 1080L1280 1140"/>
                <circle cx="80" cy="24" r="13"/><circle cx="627" cy="106" r="13"/><circle cx="972" cy="85" r="21"/><circle cx="545" cy="157" r="21"/><circle cx="772" cy="131" r="13"/><circle cx="72" cy="195" r="13"/><circle cx="325" cy="186" r="13"/><circle cx="510" cy="238" r="13"/><circle cx="1038" cy="187" r="13"/><circle cx="1408" cy="65" r="13"/><circle cx="1427" cy="139" r="21"/><circle cx="738" cy="326" r="21"/><circle cx="460" cy="353" r="13"/><circle cx="687" cy="392" r="13"/><circle cx="25" cy="398" r="13"/><circle cx="463" cy="433" r="29"/><circle cx="548" cy="441" r="13"/><circle cx="887" cy="432" r="14"/><circle cx="1207" cy="428" r="29"/><circle cx="1330" cy="450" r="13"/><circle cx="1130" cy="470" r="21"/><circle cx="84" cy="482" r="13"/><circle cx="444" cy="509" r="14"/><circle cx="260" cy="534" r="21"/><circle cx="1142" cy="543" r="13"/><circle cx="1418" cy="545" r="13"/><circle cx="227" cy="625" r="13"/><circle cx="455" cy="618" r="13"/><circle cx="880" cy="630" r="29"/><circle cx="952" cy="618" r="13"/><circle cx="1133" cy="605" r="13"/><circle cx="100" cy="664" r="21"/><circle cx="563" cy="656" r="21"/><circle cx="663" cy="661" r="13"/><circle cx="698" cy="771" r="13"/><circle cx="816" cy="760" r="13"/><circle cx="375" cy="751" r="13"/><circle cx="1156" cy="795" r="13"/><circle cx="52" cy="855" r="13"/><circle cx="1143" cy="872" r="21"/><circle cx="386" cy="905" r="13"/><circle cx="47" cy="930" r="13"/><circle cx="530" cy="918" r="13"/><circle cx="646" cy="913" r="13"/><circle cx="897" cy="930" r="13"/><circle cx="1213" cy="935" r="13"/><circle cx="108" cy="964" r="21"/><circle cx="251" cy="973" r="13"/><circle cx="580" cy="1035" r="13"/><circle cx="665" cy="1080" r="13"/><circle cx="409" cy="1090" r="13"/><circle cx="33" cy="1118" r="13"/><circle cx="1110" cy="1125" r="13"/>
              </g>
              <g transform="translate(486 543) scale(.3333)">
                <path d="M60 230 200 185C220 185 235 225 238 250L65 305C45 280 45 245 60 230ZM105 215 150 345M160 195 190 295M55 285 240 235M85 310 110 380 245 335 230 270M155 315 215 290 222 320 180 335Z"/>
                <path d="M440 155C470 145 500 165 515 205 535 215 550 210 555 200 590 230 610 270 590 300 560 330 500 330 470 310 440 290 430 250 445 235L470 245C470 210 460 180 440 155ZM510 205C495 240 500 260 515 270L495 275C495 295 515 320 535 320M540 250C565 270 575 290 565 310"/>
                <ellipse cx="880" cy="230" rx="115" ry="128"/>
                <path d="M820 260C790 240 775 225 785 205 800 190 815 200 825 215 840 190 865 195 862 225 855 240 835 255 820 260ZM885 190C885 160 910 155 925 170 945 145 965 165 960 195"/>
                <circle cx="357" cy="405" r="100"/>
                <path d="M375 320C330 320 285 360 280 410 285 460 330 490 395 475M320 372 350 358 385 435 370 440 345 385 322 390ZM365 330 367 332M407 353 409 355M428 400 430 402M412 452 414 454"/>
                <path d="M490 470C470 500 445 560 470 610L480 630 495 610C550 625 610 580 635 540 620 530 590 525 570 530M470 610C490 570 500 530 505 450 530 490 545 520 550 550M530 460C560 420 600 390 635 400 655 430 650 470 610 510M540 450 600 515M570 420 630 480M590 400 645 450M520 490 560 460 590 430M560 520 600 480 630 450"/>
                <path d="M130 555C140 520 190 480 205 490L245 530 295 500C300 515 250 560 240 575L285 590C290 610 260 610 210 625 165 630 120 590 130 555ZM175 545 200 515M190 560 220 530M210 570 240 535"/>
                <path d="M285 700C290 650 350 600 380 600 385 620 340 650 345 670 370 660 440 720 470 735 470 750 430 770 385 785 330 790 285 760 285 700ZM335 680C345 700 370 700 375 670M365 710C375 725 395 720 400 695M395 730C410 745 425 735 430 715"/>
                <path d="M500 880C500 830 560 770 605 765 610 785 575 815 580 835 600 820 625 810 640 830 660 810 690 825 685 850 670 870 640 885 625 885L670 905C675 925 640 925 590 940 540 945 500 920 500 880ZM545 850C555 880 590 890 600 860"/>
                <path d="M30 340C5 360-45 400-45 440-40 490 0 520 40 515 80 510 100 490 95 465L60 420C40 390 30 380 15 380ZM0 420C5 440 25 450 40 430M-10 440C0 460 30 480 60 470"/>
                <path d="M85 705 130 670C110 640 125 620 145 640L150 640 195 680 232 790C225 815 170 835 145 830 125 820 90 720 85 705ZM105 770 125 760M115 800 140 790"/>
                <path d="M297 795C250 810 240 860 290 880 320 890 345 870 350 845 330 860 290 850 290 825 290 810 295 800 297 795ZM757 400 838 410 800 465 785 430ZM15 755 45 760 55 785 35 803 10 800 0 780Z"/>
                <rect x="870" y="515" width="155" height="135" rx="35" transform="rotate(-15 947 582)"/>
                <path d="M880 520C865 470 920 440 950 470L965 510M905 525 905 490C915 475 935 490 935 510M940 575 935 625 990 605 955 575"/><circle cx="940" cy="562" r="18"/>
                <path d="M785 705 835 688 850 735 880 740 850 820 835 770 805 780ZM950 725 1030 775 990 780 965 820Z"/>
                <path d="M325 1030C330 980 400 950 470 945 520 950 550 970 555 1040L585 1090 420 1130C350 1110 320 1070 325 1030ZM395 1040C430 1000 460 1020 420 1075 480 1060 470 1050 505 1040"/>
                <path d="M680 970C700 915 810 890 860 960L870 1030ZM770 915C810 850 940 840 960 950M860 1000C890 940 1020 950 1030 1075ZM720 1000C760 1060 800 1070 850 1090M950 1050C930 1090 900 1120 870 1150"/>
                <path d="M180 955 240 905 295 970 260 985 295 1020 285 1025 250 990 230 1015Z"/>
                <use href="#cl" transform="translate(655 680)"/>
                <path d="M45 840C70 850 100 870 130 910 145 950 120 990 85 1000M0 1000 40 1040C70 1060 70 1100 80 1150"/>
                <circle cx="512" cy="57" r="13"/><circle cx="850" cy="42" r="13"/><circle cx="968" cy="30" r="21"/><circle cx="55" cy="175" r="29"/><circle cx="263" cy="189" r="13"/><circle cx="367" cy="205" r="21"/><circle cx="664" cy="236" r="21"/><circle cx="290" cy="266" r="13"/><circle cx="685" cy="330" r="29"/><circle cx="220" cy="387" r="13"/><circle cx="512" cy="382" r="13"/><circle cx="162" cy="435" r="21"/><circle cx="905" cy="410" r="21"/><circle cx="718" cy="506" r="29"/><circle cx="85" cy="567" r="13"/><circle cx="408" cy="551" r="21"/><circle cx="38" cy="614" r="13"/><circle cx="733" cy="609" r="21"/><circle cx="828" cy="621" r="13"/><circle cx="243" cy="679" r="13"/><circle cx="490" cy="675" r="13"/><circle cx="969" cy="692" r="13"/><circle cx="683" cy="772" r="21"/><circle cx="192" cy="869" r="13"/><circle cx="753" cy="832" r="21"/><circle cx="910" cy="810" r="13"/><circle cx="438" cy="843" r="21"/><circle cx="386" cy="905" r="13"/><circle cx="968" cy="880" r="21"/><circle cx="610" cy="1005" r="13"/><circle cx="668" cy="1058" r="21"/><circle cx="165" cy="1044" r="13"/><circle cx="278" cy="1085" r="13"/>
              </g>
            </g>
          </defs>
          <use href="#tile" x="-810"/><use href="#tile"/><use href="#tile" x="810"/><use href="#tile" x="1620"/>
          <use href="#tile" x="-810" y="1440"/><use href="#tile" y="1440"/><use href="#tile" x="810" y="1440"/><use href="#tile" x="1620" y="1440"/>
        </svg>

        <div class="convo d-flex flex-column justify-content-end">
          <div class="d-flex justify-content-end align-items-center flex-shrink-0">
            <div class="fwd d-flex align-items-center justify-content-center"><svg width="45" height="30" viewBox="0 0 45 30" fill="none" stroke="#fff" stroke-width="4.500" stroke-linecap="round" stroke-linejoin="round"><path d="M3 28V18C3 12 7 10 12 10H30M23 3 32 11 23 19M33 3 42 11 33 19"/></svg></div>
            <div class="bub-out bub-w">
              <div class="filebox d-flex">
                <svg class="xls" width="47" height="55" viewBox="0 0 47 55"><path d="M6 0H31L47 16V49A6 6 0 0 1 41 55H6A6 6 0 0 1 0 49V6A6 6 0 0 1 6 0Z" fill="#468a57"/><path d="M31 0 47 16V19H35A4 4 0 0 1 31 15Z" fill="#8fbd98"/></svg>
                <div class="filetxt"><div class="fgap"></div><div class="fmeta">2 lembar<span class="dotsep">•</span>63 kB<span class="dotsep">•</span>XLSX</div></div>
              </div>
              <div class="msgtxt" style="margin:17px 0 0 12px">Selamat Pagi Pak Iqbal, izin<br>saya kirimkan Laporan Progress<br>sentuhan debitur Agustus 2025<br>dan Prognosa September 2025<br>Depok. Penanganan sentuhan<br>debitur akan terus kami<br>maksimalkan Pak. Terimakasih</div>
              <div class="meta d-flex justify-content-end align-items-center" style="margin-top:19px;padding-right:12px;gap:11px">13.48
                <svg width="36" height="26" viewBox="0 0 36 26" fill="none" stroke="#6cb0d6" stroke-width="2.500" stroke-linecap="round"><path d="M2 14 9 23 24 2M15 23 17 24 34 2"/></svg></div>
            </div>
          </div>

          <div class="bub-in d-flex align-items-center flex-shrink-0" style="margin-top:22px">
            <svg class="tail tail-l" width="16" height="30" viewBox="0 0 16 30"><path d="M16 0H3C0 0-1 3 1 6L16 30Z" fill="#23282c"/></svg>
            <span class="msgtxt flex-grow-1" style="margin-top:-5px">Baik bu terimakasih informasinya</span>
            <span class="time-in" style="margin-top:28px">13.48</span>
            <div class="react rounded-pill d-flex align-items-center justify-content-center">
              <svg width="28" height="50" viewBox="0 0 28 50"><path d="M14 0C11.500 0 11 1 10.500 4L9 20C8 28 5 33 3 37L14 44Z" fill="#f3d9c3"/><path d="M14 0C16.500 0 17 1 17.500 4L19 20C20 28 23 33 25 37L14 44Z" fill="#eccbb2"/><path d="M3 36 13 44 10 50 1 45Z" fill="#4cc0b0"/><path d="M25 36 15 44 18 50 27 45Z" fill="#3fa89a"/></svg>
            </div>
          </div>

          <div class="datepill d-flex align-items-center justify-content-center flex-shrink-0">Hari ini</div>

          <div class="d-flex justify-content-end align-items-center flex-shrink-0">
            <div class="fwd d-flex align-items-center justify-content-center"><svg width="45" height="30" viewBox="0 0 45 30" fill="none" stroke="#fff" stroke-width="4.500" stroke-linecap="round" stroke-linejoin="round"><path d="M3 28V18C3 12 7 10 12 10H30M23 3 32 11 23 19M33 3 42 11 33 19"/></svg></div>
            <div class="bub-out bub-w has-tail">
              <svg class="tail tail-r" width="16" height="24" viewBox="0 0 16 24"><path d="M0 0H13C16 0 17 3 15 5L0 24Z" fill="#274b39"/></svg>
              <div class="filebox d-flex">
                <svg class="xls" width="47" height="55" viewBox="0 0 47 55"><path d="M6 0H31L47 16V49A6 6 0 0 1 41 55H6A6 6 0 0 1 0 49V6A6 6 0 0 1 6 0Z" fill="#468a57"/><path d="M31 0 47 16V19H35A4 4 0 0 1 31 15Z" fill="#8fbd98"/><text x="23.500" y="45" text-anchor="middle" font-family="Roboto,sans-serif" font-size="34" font-weight="500" fill="#fff">x</text></svg>
                <div class="filetxt"><div class="fname">DEPOK-JAKARTA</div><div class="fname">II-LAPORAN_PROGRESS B…</div><div class="fmeta">4 lembar<span class="dotsep">•</span>81 kB<span class="dotsep">•</span>XLSX</div></div>
              </div>
              <div class="meta d-flex justify-content-end align-items-center" style="margin-top:12px;padding-right:12px;gap:11px">13.55
                <svg width="36" height="26" viewBox="0 0 36 26" fill="none" stroke="#a2b4ab" stroke-width="2.500" stroke-linecap="round"><path d="M2 14 9 23 24 2M15 23 17 24 34 2"/></svg></div>
            </div>
          </div>

          <div class="bub-out bub-long align-self-end flex-shrink-0">
            <div class="msgtxt">Selamat Siang Pak Iqbal, izin saya kirimkan Laporan Progress sentuhan debitur<br>September 2025 dan Prognosa Oktober 2025 Depok. Penanganan sentuhan debitur<br>akan terus kami maksimalkan Pak. Terimakasih</div>
            <div class="meta meta-abs d-flex align-items-center" style="gap:11px">13.55
              <svg width="36" height="26" viewBox="0 0 36 26" fill="none" stroke="#a2b4ab" stroke-width="2.500" stroke-linecap="round"><path d="M2 14 9 23 24 2M15 23 17 24 34 2"/></svg></div>
          </div>
        </div>

        <div class="askcard flex-shrink-0">
          <div class="asktext">1 kartu kontak ditemukan untuk nomor ini. Tambahkan ke kontak Anda?</div>
          <div class="askrow d-flex align-items-center" style="margin-top:26px">
            <svg class="askic" width="50" height="36" viewBox="0 0 50 36" fill="none" stroke="#57bb6e" stroke-width="4.400"><circle cx="19" cy="9" r="6.500"/><path d="M31 1C37 3 39 14 32 18 34 12 34 6 31 1Z" fill="#57bb6e" stroke="none"/><path d="M3 33.500C2 25 13 22 20 22 28 22 37 25 36 33.500Z"/><path d="M38 21C45 23 50 28 50 36H42C42 29 41 25 38 21Z" fill="#57bb6e" stroke="none"/></svg>
            <span>Lihat kartu kontak</span>
          </div>
          <div class="askrow d-flex align-items-center">
            <svg class="askic" width="50" height="32" viewBox="0 0 50 32" fill="none" stroke="#57bb6e" stroke-width="4" stroke-linecap="round"><path d="M11 2 39 30M39 2 11 30"/></svg>
            <span>Tidak, terima kasih</span>
          </div>
          <div class="seam"></div>
        </div>

        <div class="composer d-flex align-items-start">
          <div class="inputbox d-flex align-items-center">
            <svg width="46" height="46" viewBox="0 0 46 46" fill="none" stroke="#8b9195" stroke-width="3.600"><path d="M12 2H34A10 10 0 0 1 44 12V26L26 44H12A10 10 0 0 1 2 34V12A10 10 0 0 1 12 2Z"/><circle cx="15" cy="17" r="3" fill="#8b9195" stroke="none"/><circle cx="31" cy="17" r="3" fill="#8b9195" stroke="none"/><path d="M10 27H38C34 36 28 36 26 44 24 36 12 38 10 27Z" fill="#8b9195" stroke="none"/></svg>
            <div class="cursorbar"></div>
            <span class="hint">Pesan</span>
            <svg class="ms-auto" width="28" height="46" viewBox="0 0 28 46" fill="none" stroke="#8b9195" stroke-width="3.400" stroke-linecap="round"><path d="M26 14V33A12 12 0 0 1 2 33V10A8 8 0 0 1 18 10V31A4.500 4.500 0 0 1 9 31V12"/></svg>
            <svg style="margin-left:71px" width="46" height="42" viewBox="0 0 46 42" fill="none" stroke="#8b9195" stroke-width="3.600" stroke-linejoin="round"><path d="M3 10H13L17 3H29L33 10H43V39H3Z"/><circle cx="23" cy="23" r="8.500"/></svg>
          </div>
          <div class="micbtn rounded-circle d-flex align-items-center justify-content-center">
            <svg width="53" height="53" viewBox="0 0 24 24" fill="#12171b"><path d="M12 14c1.660 0 3-1.340 3-3V5c0-1.660-1.340-3-3-3S9 3.340 9 5v6c0 1.660 1.340 3 3 3zm5-3c0 2.760-2.240 5-5 5s-5-2.240-5-5H5c0 3.530 2.610 6.430 6 6.920V21h2v-3.080c3.390-.49 6-3.390 6-6.920h-2z"/></svg>
          </div>
        </div>
        <div class="scrollthumb"></div>
      </div>
    </div>
  </div>
</div>
<script src="https://cdn.jsdelivr.net/npm/bootstrap@5.3.0/dist/js/bootstrap.bundle.min.js"></script>
</body>
</html>
